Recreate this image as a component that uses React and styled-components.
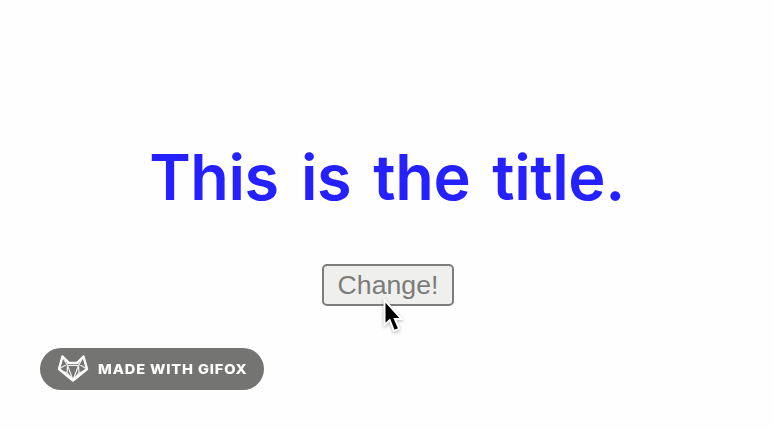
import React from 'react';
import styled, { createGlobalStyle } from 'styled-components';

const GlobalStyle = createGlobalStyle`
  * { box-sizing: border-box; }
  body { margin: 0; background: #fefefe; overflow: hidden; }
`;

const Page = styled.main`
  position: relative;
  height: 430px;
  display: flex;
  flex-direction: column;
  align-items: center;
  padding-top: 137px;
  background: #fefefe;
`;

const Title = styled.h1`
  margin: 0;
  height: 80px;
  font: 600 63px/80px Inter, sans-serif;
  letter-spacing: -0.4px;
  word-spacing: 6.6px;
  white-space: nowrap;
  color: #2420ff;
`;

const ChangeButton = styled.button`
  width: 132px;
  height: 42px;
  margin-top: 47px;
  margin-left: 2px;
  padding: 0;
  border: 2px solid #7d7d7b;
  border-radius: 5px;
  background: #efefee;
  color: #7b7b79;
  font: 26.67px/36px 'Liberation Sans', Arial, sans-serif;
`;

const Cursor = styled.svg`
  position: absolute;
  left: 380px;
  top: 296px;
  filter: drop-shadow(0 1px 1.5px rgba(0, 0, 0, 0.3));
`;

const Badge = styled.div`
  position: absolute;
  left: 40px;
  top: 348px;
  width: 224px;
  height: 42px;
  display: flex;
  align-items: center;
  padding-left: 17px;
  gap: 9px;
  border-radius: 21px;
  background: #747472;
  color: #fff;
`;

const BadgeText = styled.span`
  font: 800 13.4px/42px Inter, sans-serif;
  letter-spacing: 0.8px;
  white-space: nowrap;
  transform: scaleX(1.09);
  transform-origin: left;
`;

const FoxIcon = () => (
  <svg width="32" height="30" viewBox="0 0 32 30" fill="none" stroke="#fff" strokeLinejoin="round">
    <path d="M5.500 2.500 12 9h8l6.500-6.500 3.500 12.500L16 26.500 2 15Z" strokeWidth="2.4" />
    <path d="M2 15 12 9M30 15 20 9M5.500 2.500l5 9L16 26l5.500-14.500 5-9M10.500 11.500h11M3 16l7 3 6 7M29 16l-7 3-6 7M10.500 11.500 10 19M21.500 11.500 22 19" strokeWidth="1.2" strokeOpacity="0.9" />
  </svg>
);

export default function App() {
  return (
    <>
      <GlobalStyle />
      <Page>
        <Title>This is the title.</Title>
        <ChangeButton>Change!</ChangeButton>
        <Cursor width="27" height="42" viewBox="0 0 27 42">
          <path d="M4.500 4v25l5.200-4.800 4.300 10.800 5.200-2.200-4.300-9.800h6.700Z" fill="#000" stroke="#fff" strokeWidth="2" />
        </Cursor>
        <Badge>
          <FoxIcon />
          <BadgeText>MADE WITH GIFOX</BadgeText>
        </Badge>
      </Page>
    </>
  );
}
